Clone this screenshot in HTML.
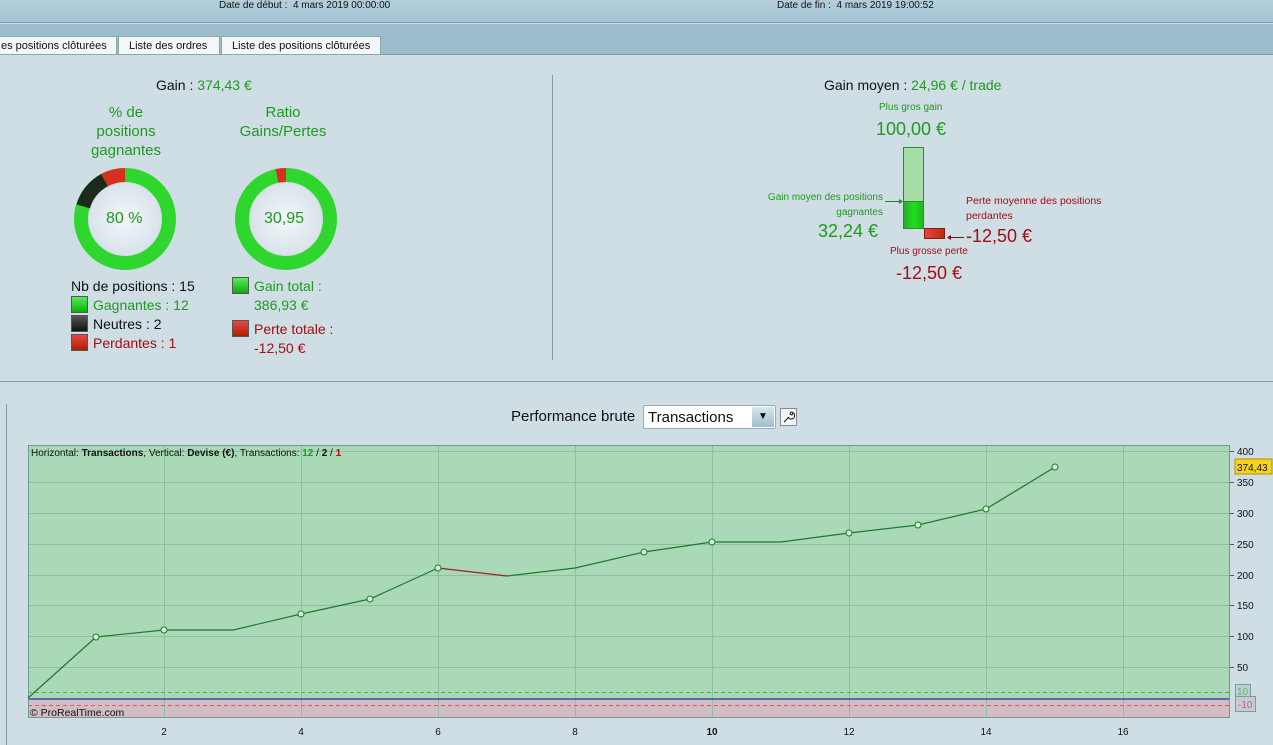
<!DOCTYPE html>
<html><head><meta charset="utf-8"><style>
*{margin:0;padding:0;box-sizing:border-box}
body{width:1273px;height:745px;overflow:hidden;background:#cfdde5;font-family:"Liberation Sans",Arial,sans-serif;position:relative}
.a{position:absolute;white-space:nowrap}
.g{color:#1f9a1f}.r{color:#a01010}
.sq{display:inline-block;width:17px;height:17px;vertical-align:-3px;margin-right:5px;border:1px solid #555}
</style></head><body>
<div class="a" style="left:0;top:0;width:1273px;height:23px;background:linear-gradient(#b3cfdc,#a3c2d1);border-bottom:1px solid #7b9aa9"></div>
<div class="a" style="left:219px;top:0;font-size:10px;color:#111">Date de début :&nbsp; 4 mars 2019 00:00:00</div>
<div class="a" style="left:777px;top:0;font-size:10px;color:#111">Date de fin :&nbsp; 4 mars 2019 19:00:52</div>
<div class="a" style="left:0;top:24px;width:1273px;height:31px;background:#9dbdcc;border-bottom:1px solid #7d9dac"></div>
<div class="a" style="left:-2px;top:36px;width:119px;height:19px;background:#f4f6f7;border:1px solid #8aa;font-size:11px;padding:3px 0 0 2px;color:#111">es positions clôturées</div>
<div class="a" style="left:118px;top:36px;width:102px;height:19px;background:#f4f6f7;border:1px solid #8aa;font-size:11px;padding:3px 0 0 10px;color:#111">Liste des ordres</div>
<div class="a" style="left:221px;top:36px;width:160px;height:19px;background:#f4f6f7;border:1px solid #8aa;font-size:11px;padding:3px 0 0 10px;color:#111">Liste des positions clôturées</div>

<div class="a" style="left:156px;top:77px;font-size:14px;color:#111">Gain : <span class="g">374,43 €</span></div>
<div class="a g" style="left:68px;top:103px;width:116px;text-align:center;font-size:15px;line-height:19px;white-space:normal">% de<br>positions<br>gagnantes</div>
<div class="a g" style="left:225px;top:103px;width:116px;text-align:center;font-size:15px;line-height:19px;white-space:normal">Ratio<br>Gains/Pertes</div>
<svg class="a" style="left:0;top:0" width="560" height="380">
<defs><radialGradient id="in"><stop offset="0" stop-color="#f4f7f9"/><stop offset="1" stop-color="#d8e3ea"/></radialGradient></defs>
<circle cx="125" cy="219" r="44" fill="none" stroke="#2ed62e" stroke-width="14"/>
<path d="M125 175 A44 44 0 0 0 104.5 180.1" fill="none" stroke="#d83020" stroke-width="14"/>
<path d="M104.5 180.1 A44 44 0 0 0 83.2 206.4" fill="none" stroke="#1c2a1c" stroke-width="14"/>
<circle cx="125" cy="219" r="36" fill="url(#in)"/>
<circle cx="286" cy="219" r="44" fill="none" stroke="#2ed62e" stroke-width="14"/>
<path d="M286 175 A44 44 0 0 0 277 175.9" fill="none" stroke="#d83020" stroke-width="14"/>
<circle cx="286" cy="219" r="36" fill="url(#in)"/>
<line x1="552.5" y1="75" x2="552.5" y2="360" stroke="#8a9aa4"/>
</svg>
<div class="a g" style="left:106px;top:210px;font-size:16px">80 %</div>
<div class="a g" style="left:264px;top:210px;font-size:16px">30,95</div>
<div class="a" style="left:71px;top:277px;font-size:14px;line-height:19px;color:#111">Nb de positions : 15<br>
<span class="sq" style="background:linear-gradient(#5e5,#1a1)"></span><span class="g">Gagnantes : 12</span><br>
<span class="sq" style="background:linear-gradient(#555,#111)"></span>Neutres : 2<br>
<span class="sq" style="background:linear-gradient(#e44,#a20)"></span><span class="r">Perdantes : 1</span></div>
<div class="a" style="left:232px;top:277px;font-size:14px;line-height:19px"><span class="sq" style="background:linear-gradient(#5e5,#1a1)"></span><span class="g">Gain total :</span><br><span class="g" style="padding-left:22px">386,93 €</span></div>
<div class="a" style="left:232px;top:320px;font-size:14px;line-height:19px"><span class="sq" style="background:linear-gradient(#e44,#a20)"></span><span class="r">Perte totale :</span><br><span class="r" style="padding-left:22px">-12,50 €</span></div>

<div class="a" style="left:824px;top:77px;font-size:14px;color:#111">Gain moyen : <span class="g">24,96 € / trade</span></div>
<div class="a g" style="left:879px;top:102px;font-size:10px">Plus gros gain</div>
<div class="a g" style="left:876px;top:119px;font-size:18px">100,00 €</div>
<div class="a" style="left:903px;top:147px;width:21px;height:55px;background:#a6dca6;border:1px solid #2a8a2a"></div>
<div class="a" style="left:903px;top:201px;width:21px;height:28px;background:linear-gradient(90deg,#2ea82e,#1ee01e,#22b822);border:1px solid #2a8a2a"></div>
<div class="a" style="left:924px;top:228px;width:21px;height:11px;background:linear-gradient(90deg,#e84040,#b83010);border:1px solid #802010"></div>
<div class="a g" style="left:740px;width:143px;top:190px;font-size:10px;text-align:right;line-height:15px">Gain moyen des positions<br>gagnantes</div>
<svg class="a" style="left:880px;top:195px" width="30" height="14">
<line x1="5" y1="6.5" x2="22" y2="6.5" stroke="#1f8a1f"/><path d="M19 4 L23 6.5 L19 9Z" fill="#1f8a1f"/>
</svg>
<svg class="a" style="left:944px;top:232px" width="20" height="10"><line x1="5" y1="5.5" x2="20" y2="5.5" stroke="#801010"/><path d="M7 3 L3 5.5 L7 8Z" fill="#801010"/></svg>
<div class="a g" style="left:818px;top:221px;font-size:18px">32,24 €</div>
<div class="a r" style="left:966px;top:194px;font-size:10.5px;line-height:15px">Perte moyenne des positions<br>perdantes</div>
<div class="a r" style="left:966px;top:226px;font-size:18px">-12,50 €</div>
<div class="a r" style="left:890px;top:246px;font-size:10px">Plus grosse perte</div>
<div class="a r" style="left:896px;top:263px;font-size:18px">-12,50 €</div>

<div class="a" style="left:0;top:381px;width:1273px;height:1px;background:#8a9aa4"></div>
<div class="a" style="left:6px;top:404px;width:1px;height:341px;background:#8a9aa4"></div>
<div class="a" style="left:511px;top:408px;font-size:15px;color:#111">Performance brute</div>
<div class="a" style="left:643px;top:405px;width:133px;height:24px;background:#fff;border:1px solid #9ab;border-radius:2px;font-size:15px;padding:3px 0 0 4px;color:#111">Transactions</div>
<div class="a" style="left:752px;top:407px;width:22px;height:20px;background:linear-gradient(#d8e6ee,#9fbccc);font-size:10px;text-align:center;padding-top:4px">&#9660;</div>
<div class="a" style="left:780px;top:408px;width:17px;height:18px;background:#f4f6f7;border:1px solid #889"></div>
<svg class="a" style="left:780px;top:408px" width="17" height="18"><path d="M4 14 L9 9 M8 9 A3.5 3.5 0 1 0 11 4 L10 6 L12 7 L13 5" fill="none" stroke="#222" stroke-width="1.1"/></svg>

<svg class="a" style="left:0;top:0" width="1273" height="745" font-family="Liberation Sans,Arial,sans-serif">
<rect x="28" y="445" width="1202" height="254" fill="#aad9b8"/>
<rect x="28" y="699" width="1202" height="19" fill="#d4bcc4"/>
<g stroke="#8fbf9d" stroke-width="1">
<line x1="28" y1="451.5" x2="1230" y2="451.5"/><line x1="28" y1="482.5" x2="1230" y2="482.5"/><line x1="28" y1="513.5" x2="1230" y2="513.5"/><line x1="28" y1="544.5" x2="1230" y2="544.5"/><line x1="28" y1="575.5" x2="1230" y2="575.5"/><line x1="28" y1="605.5" x2="1230" y2="605.5"/><line x1="28" y1="636.5" x2="1230" y2="636.5"/><line x1="28" y1="667.5" x2="1230" y2="667.5"/>
<line x1="164.5" y1="445" x2="164.5" y2="718"/><line x1="301.5" y1="445" x2="301.5" y2="718"/><line x1="438.5" y1="445" x2="438.5" y2="718"/><line x1="575.5" y1="445" x2="575.5" y2="718"/><line x1="712.5" y1="445" x2="712.5" y2="718"/><line x1="849.5" y1="445" x2="849.5" y2="718"/><line x1="986.5" y1="445" x2="986.5" y2="718"/><line x1="1123.5" y1="445" x2="1123.5" y2="718"/>
</g>
<line x1="28" y1="692.5" x2="1230" y2="692.5" stroke="#44bb44" stroke-dasharray="4,3"/>
<line x1="28" y1="699" x2="1230" y2="699" stroke="#2233aa" stroke-width="1.2"/>
<line x1="28" y1="705.5" x2="1230" y2="705.5" stroke="#d06060" stroke-dasharray="4,3"/>
<rect x="28.5" y="445.5" width="1201" height="272" fill="none" stroke="#6f9a90"/>
<polyline fill="none" stroke="#1d7a2a" stroke-width="1.2" points="28,698 96,637 164,630 233,630 301,614 370,599 438,568"/>
<polyline fill="none" stroke="#a02020" stroke-width="1.2" points="438,568 507,576"/>
<polyline fill="none" stroke="#1d7a2a" stroke-width="1.2" points="507,576 575,568 644,552 712,542 781,542 849,533 918,525 986,509 1055,467"/>
<g fill="#d8eedd" stroke="#1d7a2a"><circle cx="96" cy="637" r="3"/><circle cx="164" cy="630" r="3"/><circle cx="301" cy="614" r="3"/><circle cx="370" cy="599" r="3"/><circle cx="438" cy="568" r="3"/><circle cx="644" cy="552" r="3"/><circle cx="712" cy="542" r="3"/><circle cx="849" cy="533" r="3"/><circle cx="918" cy="525" r="3"/><circle cx="986" cy="509" r="3"/><circle cx="1055" cy="467" r="3"/></g>
<text x="31" y="456" font-size="10" fill="#111">Horizontal: <tspan font-weight="bold">Transactions</tspan>, Vertical: <tspan font-weight="bold">Devise (€)</tspan>, Transactions: <tspan font-weight="bold" fill="#1f9a1f">12</tspan> / <tspan font-weight="bold">2</tspan> / <tspan font-weight="bold" fill="#b01010">1</tspan></text>
<text x="30" y="716" font-size="10.5" fill="#111">© ProRealTime.com</text>
<g font-size="10" fill="#111">
<text x="1237" y="455">400</text><text x="1237" y="486">350</text><text x="1237" y="517">300</text><text x="1237" y="548">250</text><text x="1237" y="579">200</text><text x="1237" y="609">150</text><text x="1237" y="640">100</text><text x="1237" y="671">50</text>
</g>
<g stroke="#555"><line x1="1230" y1="451.5" x2="1234" y2="451.5"/><line x1="1230" y1="482.5" x2="1234" y2="482.5"/><line x1="1230" y1="513.5" x2="1234" y2="513.5"/><line x1="1230" y1="544.5" x2="1234" y2="544.5"/><line x1="1230" y1="575.5" x2="1234" y2="575.5"/><line x1="1230" y1="605.5" x2="1234" y2="605.5"/><line x1="1230" y1="636.5" x2="1234" y2="636.5"/><line x1="1230" y1="667.5" x2="1234" y2="667.5"/></g>
<rect x="1235" y="459" width="37" height="15" fill="#f7d21a" stroke="#b09010"/>
<text x="1237" y="471" font-size="10" fill="#111">374,43</text>
<rect x="1235.5" y="684.5" width="15" height="14" fill="#b8d2cc" stroke="#7a9aa4"/>
<text x="1237" y="695" font-size="10" fill="#5cbf5c">10</text>
<rect x="1235.5" y="696.5" width="20" height="15" fill="#c4cdd3" stroke="#7a9aa4"/>
<text x="1238" y="708" font-size="10" fill="#c06070">-10</text>
<g font-size="10" fill="#111" text-anchor="middle">
<text x="164" y="735">2</text><text x="301" y="735">4</text><text x="438" y="735">6</text><text x="575" y="735">8</text><text x="712" y="735" font-weight="bold">10</text><text x="849" y="735">12</text><text x="986" y="735">14</text><text x="1123" y="735">16</text>
</g>
</svg>
</body></html>
